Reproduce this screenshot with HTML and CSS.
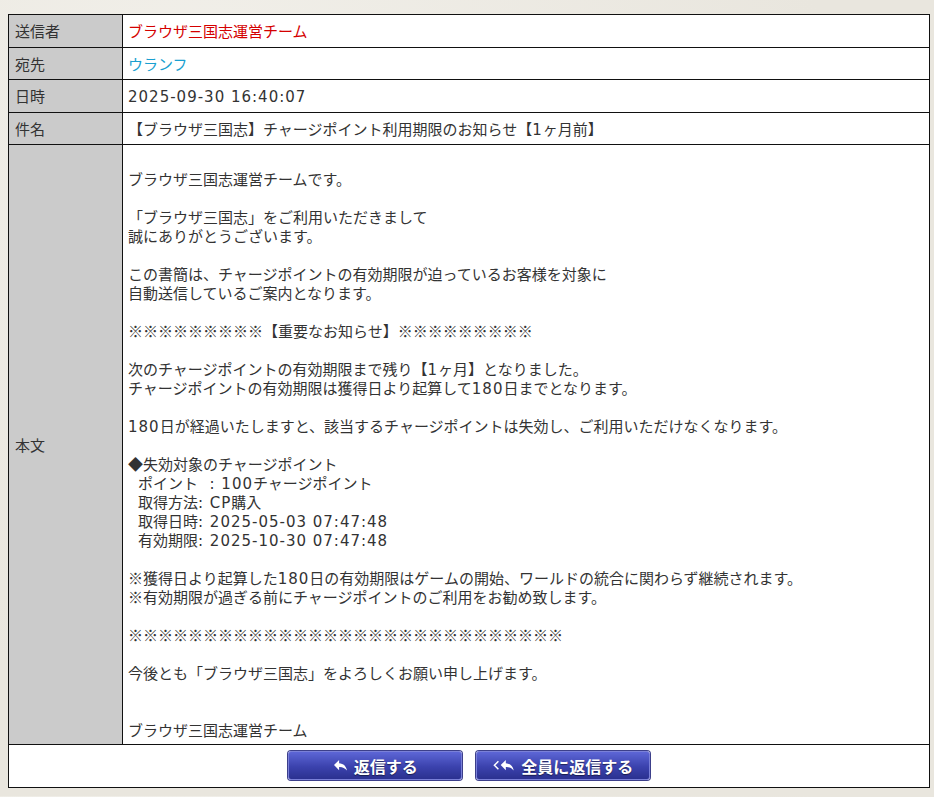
FILE: index.html
```html
<!DOCTYPE html>
<html lang="ja">
<head>
  <meta charset="UTF-8">
  <meta name="viewport" content="width=device-width, initial-scale=1.0">
  <title>書簡</title>
  <link rel="stylesheet" href="styles.css">
</head>
<body>
  <table class="letter">
    <tr>
      <th>送信者</th>
      <td class="sender">ブラウザ三国志運営チーム</td>
    </tr>
    <tr>
      <th>宛先</th>
      <td class="to">ウランフ</td>
    </tr>
    <tr>
      <th>日時</th>
      <td><span class="num">2025-09-30 16:40:07</span></td>
    </tr>
    <tr>
      <th>件名</th>
      <td>【ブラウザ三国志】チャージポイント利用期限のお知らせ【<span class="num">1</span>ヶ月前】</td>
    </tr>
    <tr>
      <th>本文</th>
      <td class="body-text">
<br>ブラウザ三国志運営チームです。<br>
<br>「ブラウザ三国志」をご利用いただきまして
<br>誠にありがとうございます。<br>
<br>この書簡は、チャージポイントの有効期限が迫っているお客様を対象に
<br>自動送信しているご案内となります。<br>
<br>※※※※※※※※※【重要なお知らせ】※※※※※※※※※<br>
<br>次のチャージポイントの有効期限まで残り【<span class="num">1</span>ヶ月】となりました。
<br>チャージポイントの有効期限は獲得日より起算して<span class="num">180</span>日までとなります。<br>
<br><span class="num">180</span>日が経過いたしますと、該当するチャージポイントは失効し、ご利用いただけなくなります。<br>
<br>◆失効対象のチャージポイント
<br><span class="ind">ポイント<span class="num">&nbsp;&nbsp;:&nbsp;100</span>チャージポイント</span>
<br><span class="ind">取得方法<span class="num">:&nbsp;CP</span>購入</span>
<br><span class="ind">取得日時<span class="num">:&nbsp;2025-05-03 07:47:48</span></span>
<br><span class="ind">有効期限<span class="num">:&nbsp;2025-10-30 07:47:48</span></span><br>
<br>※獲得日より起算した<span class="num">180</span>日の有効期限はゲームの開始、ワールドの統合に関わらず継続されます。
<br>※有効期限が過ぎる前にチャージポイントのご利用をお勧め致します。<br>
<br>※※※※※※※※※※※※※※※※※※※※※※※※※※※※※<br>
<br>今後とも「ブラウザ三国志」をよろしくお願い申し上げます。<br>
<br>
<br>ブラウザ三国志運営チーム
      </td>
    </tr>
    <tr>
      <td colspan="2" class="actions">
        <button class="btn" type="button">
          <svg viewBox="0 0 16 14" width="15" height="13"><path d="M6.5 1 L1 6.5 L6.5 12 V8.6 C10 8.4 12.6 9.6 15 12.5 C14.2 7.6 11.2 4.8 6.5 4.5 Z" fill="#fff"/></svg>
          返信する
        </button>
        <button class="btn" type="button">
          <svg viewBox="0 0 24 14" width="23" height="13"><path d="M6.5 2.5 L2.2 6.8 L6.5 11" fill="none" stroke="#fff" stroke-width="1.6"/><path d="M14.5 1 L9 6.5 L14.5 12 V8.6 C18 8.4 20.6 9.6 23 12.5 C22.2 7.6 19.2 4.8 14.5 4.5 Z" fill="#fff"/></svg>
          全員に返信する
        </button>
      </td>
    </tr>
  </table>
</body>
</html>
```

FILE: styles.css
```css
/* Page */
body {
  margin: 14px 4px 8px 8px;
  background: #ebe8e1;
  background-image: radial-gradient(ellipse at 20% 10%, #f1efe9 0%, #e9e6de 60%);
  font-family: "Noto Sans CJK JP", "DejaVu Sans", sans-serif;
  font-size: 15px;
  color: #333;
}

/* Letter table */
.letter {
  width: 100%;
  border-collapse: collapse;
  background: #fff;
  border: 1px solid #111;
}

.letter th,
.letter td {
  border: 1px solid #111;
  line-height: 19px;
  padding: 6px 5px 6.5px 5px;
  text-align: left;
  vertical-align: middle;
}

.letter th {
  width: 102px;
  background: #cbcbcb;
  font-weight: normal;
  color: #333;
  padding-left: 6px;
}

.letter td.sender {
  color: #d40000;
}

.letter td.to {
  color: #1a9fd0;
}

.letter td.body-text {
  padding-top: 5px;
  padding-bottom: 5px;
}

/* latin runs are drawn wider, like the game's font;
   line-height 1 keeps them from stretching the line */
.num {
  font-family: "DejaVu Sans", sans-serif;
  letter-spacing: 1px;
  line-height: 1;
}

.ind {
  padding-left: 10px;
}

/* Buttons */
.letter td.actions {
  text-align: center;
  padding: 6px 0 7px;
}

.btn {
  display: inline-flex;
  align-items: center;
  justify-content: center;
  gap: 6px;
  width: 174px;
  height: 29px;
  margin: 0 5px;
  padding: 0;
  border: 1px solid #7a80d8;
  border-radius: 3px;
  background: linear-gradient(#5d66d6, #3b42ad 55%, #2b3190);
  color: #fff;
  font-family: "Noto Sans CJK JP", sans-serif;
  font-weight: bold;
  font-size: 16px;
  text-shadow: 0 1px 1px rgba(0, 0, 0, 0.5);
  box-shadow: 0 0 0 1px #3c3f8a;
  cursor: pointer;
}

.btn svg {
  flex: none;
}
```
